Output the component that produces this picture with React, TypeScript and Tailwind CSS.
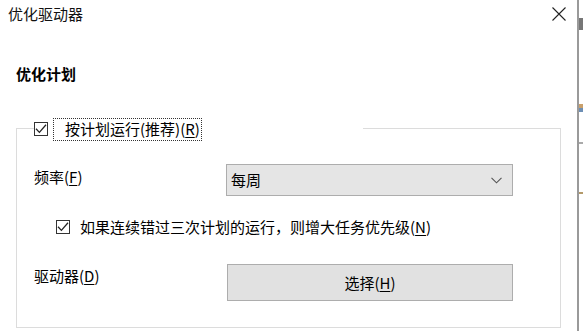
import React from "react";

function Check() {
    return (
        <span className="w-[14px] h-[14px] border border-[#333333] bg-white flex items-center justify-center shrink-0">
            <svg width="12" height="12" viewBox="0 0 12 12" fill="none">
                <path d="M1 5.8 L4.4 9.4 L11 1.8" stroke="#222222" strokeWidth="1.3" />
            </svg>
        </span>
    );
}

function Key({ k }: { k: string }) {
    return (
        <>
            (<span className="underline underline-offset-2">{k}</span>)
        </>
    );
}

export default function App() {
    return (
        <div
            className="w-[583px] h-[331px] bg-white overflow-hidden flex text-[15px] text-black"
            style={{ fontFamily: '"Noto Sans CJK SC", "Noto Sans", sans-serif' }}
        >
            {/* Dialog */}
            <div className="w-[577px] h-full flex flex-col">
                {/* Title bar */}
                <div className="h-[27px] flex items-center justify-between pl-2 pr-[11px]">
                    <span className="leading-[20px] text-[#111]">优化驱动器</span>
                    <svg width="14" height="14" viewBox="0 0 14 14" fill="none">
                        <path d="M0.5 0.5 L13.5 13.5 M13.5 0.5 L0.5 13.5" stroke="#222" strokeWidth="1.1" />
                    </svg>
                </div>

                <div className="pl-4 mt-[37px] leading-[20px] font-bold">优化计划</div>

                {/* Group box */}
                <div className="ml-4 mt-[44px] w-[545px] h-[200px] border border-[#dcdcdc] flex flex-col">
                    {/* Legend covering top border */}
                    <div className="-mt-[12px] ml-[17px] w-[329px] h-[24px] bg-white flex items-center">
                        <Check />
                        <span className="ml-[5px] h-[23px] border border-dotted border-[#333] pl-[11px] pr-[1px] flex items-center leading-[20px]">
                            按计划运行(推荐)<Key k="R" />
                        </span>
                    </div>

                    <div className="mt-[23px] pl-[17px] flex items-start">
                        <span className="w-[192px] pt-[3px] leading-[20px]">
                            频率<Key k="F" />
                        </span>
                        <div className="w-[287px] h-[32px] bg-[#e5e5e5] border border-[#adadad] flex items-center justify-between pl-[4px] pr-[10px]">
                            <span className="leading-[20px]">每周</span>
                            <svg width="11" height="7" viewBox="0 0 11 7" fill="none">
                                <path d="M0.5 0.8 L5.5 5.8 L10.5 0.8" stroke="#555" strokeWidth="1.1" />
                            </svg>
                        </div>
                    </div>

                    <div className="mt-[21px] h-[20px] pl-[39px] flex items-center">
                        <Check />
                        <span className="ml-[10px] leading-[20px]">
                            如果连续错过三次计划的运行，则增大任务优先级<Key k="N" />
                        </span>
                    </div>

                    <div className="mt-[27px] pl-[17px] flex items-start">
                        <span className="w-[193px] pt-[2px] leading-[20px]">
                            驱动器<Key k="D" />
                        </span>
                        <div className="w-[286px] h-[37px] bg-[#e1e1e1] border border-[#adadad] flex items-center justify-center">
                            <span className="leading-[20px]">
                                选择<Key k="H" />
                            </span>
                        </div>
                    </div>
                </div>
            </div>

            {/* Edge of the window behind */}
            <div className="flex-1 h-full border-l-2 border-[#9a9a9a] bg-white flex flex-col">
                <div className="mt-[18px] h-[12px] bg-[#777]" />
                <div className="mt-[74px] h-[4px] bg-[#c9a06c]" />
                <div className="h-[4px] bg-[#6d8fb5]" />
                <div className="mt-[30px] h-[2px] bg-[#aaa]" />
                <div className="mt-[48px] h-[2px] bg-[#b49a6a]" />
            </div>
        </div>
    );
}
